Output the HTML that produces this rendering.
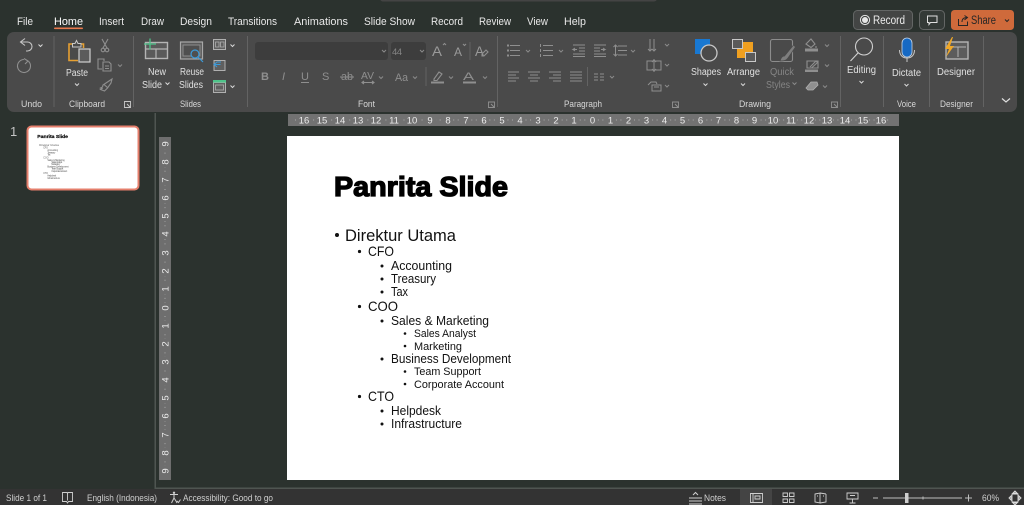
<!DOCTYPE html>
<html lang="en"><head><meta charset="utf-8"><title>Panrita Slide</title>
<style>
html,body{margin:0;padding:0;width:1024px;height:505px;overflow:hidden;background:#2b322e}
svg{display:block}
text{font-family:"Liberation Sans",sans-serif;white-space:pre}
.t{font-size:11px;fill:#e8e8e8}
.l{font-size:9.5px;fill:#d8d8d8}
.b{font-size:10px;fill:#e0e0e0}
.d{fill:#858585}
.i{fill:none;stroke:#c4c4c4;stroke-width:1.100}
.g{fill:none;stroke:#8f8f8f;stroke-width:1.100}
.c{fill:none;stroke:#d8d8d8;stroke-width:1}
.cg{fill:none;stroke:#8a8a8a;stroke-width:1}
.r{fill:#ececec;font-size:9.500px;text-anchor:middle}
.st{font-size:9.500px;fill:#cfcfcf}
</style></head><body>
<svg width="1024" height="505" viewBox="0 0 1024 505" xmlns="http://www.w3.org/2000/svg">
<rect width="1024" height="505" fill="#2b322e"/>
<rect x="380" y="-8" width="277" height="9.500" rx="3" fill="#444"/>

<!-- tabs -->
<g class="t">
<text x="17" y="25" textLength="16" lengthAdjust="spacingAndGlyphs">File</text>
<text x="54" y="25" textLength="29" lengthAdjust="spacingAndGlyphs" fill="#fff">Home</text>
<text x="99" y="25" textLength="25" lengthAdjust="spacingAndGlyphs">Insert</text>
<text x="141" y="25" textLength="23" lengthAdjust="spacingAndGlyphs">Draw</text>
<text x="180" y="25" textLength="32" lengthAdjust="spacingAndGlyphs">Design</text>
<text x="228" y="25" textLength="49" lengthAdjust="spacingAndGlyphs">Transitions</text>
<text x="294" y="25" textLength="54" lengthAdjust="spacingAndGlyphs">Animations</text>
<text x="364" y="25" textLength="51" lengthAdjust="spacingAndGlyphs">Slide Show</text>
<text x="431" y="25" textLength="32" lengthAdjust="spacingAndGlyphs">Record</text>
<text x="479" y="25" textLength="32" lengthAdjust="spacingAndGlyphs">Review</text>
<text x="527" y="25" textLength="21" lengthAdjust="spacingAndGlyphs">View</text>
<text x="564" y="25" textLength="22" lengthAdjust="spacingAndGlyphs">Help</text>
</g>
<rect x="54" y="27.500" width="29" height="1.600" rx=".8" fill="#e8794e"/>

<!-- top-right buttons -->
<rect x="853.500" y="10.500" width="59" height="19" rx="4" fill="#434544" stroke="#636665"/>
<circle cx="865" cy="20" r="4.600" fill="none" stroke="#e6e6e6"/><circle cx="865" cy="20" r="3" fill="#e6e6e6"/>
<text x="873" y="24" font-size="11.500" fill="#ececec" textLength="32" lengthAdjust="spacingAndGlyphs">Record</text>
<rect x="919.500" y="10.500" width="25" height="19" rx="4" fill="#343a37" stroke="#636665"/>
<path d="M927.500 16h9.500v6.500h-6.500l-1.500 2v-2h-1.500z" fill="none" stroke="#e0e0e0"/>
<rect x="951" y="10" width="63" height="20" rx="3.500" fill="#cf6a3b"/>
<path d="M958.500 19v6.500h9v-4M962 22c0-3 2-4.500 5-4.500M964.500 15.500l3 2-3 2.300" fill="none" stroke="#262626"/>
<text x="971" y="24" font-size="11.500" fill="#262626" textLength="25" lengthAdjust="spacingAndGlyphs">Share</text>
<path d="M1005 19.500l2 2 2-2" fill="none" stroke="#262626"/>

<!-- ribbon -->
<rect x="7" y="32" width="1010" height="80" rx="7" fill="#4a4a4a"/>
<g stroke="#636363" stroke-width="1">
<path d="M54 36v71M133.500 36v71M247.500 36v71M497.500 36v71M840.500 36v71M883.500 36v71M929.500 36v71M983.500 36v71"/>
<path d="M470 42v18M426 67v19M587.500 67v19"/>
</g>

<!-- undo group -->
<path class="i" d="M25 38.500l-4.500 3.500 4.500 3.500M20.500 42h7a4.500 4.500 0 0 1 0 9h-1.500"/>
<path class="c" d="M38.500 44.500l2 2 2-2"/>
<path class="g" d="M24 59.500a6.500 6.500 0 1 0 4.500 1.800M24 58.500l4 2.500-3 3"/>
<text class="l" x="21" y="107" textLength="21" lengthAdjust="spacingAndGlyphs">Undo</text>

<!-- clipboard group -->
<path d="M75 44h-6v16.500h9" fill="none" stroke="#e6a032" stroke-width="1.600"/>
<path d="M81 44h2.500v4" fill="none" stroke="#e6a032" stroke-width="1.600"/>
<path d="M72.500 47v-3.500h2.500l1.500-3 1.500 3h3V47z" fill="#4a4a4a" stroke="#c8c8c8"/>
<rect x="79" y="49" width="11" height="13" fill="#5b5b5b" stroke="#d0d0d0" stroke-width="1.200"/>
<text class="b" x="66" y="76" textLength="22" lengthAdjust="spacingAndGlyphs">Paste</text>
<path class="c" d="M75 83.500l2 2 2-2"/>
<path class="g" d="M102 39l5 9M108 39l-5 9"/><circle class="g" cx="103" cy="50" r="1.800"/><circle class="g" cx="107" cy="50" r="1.800"/>
<path class="g" d="M102 69h-4v-10h6v2M103 62h6l2 2v7h-8z"/>
<path class="g" d="M105 66h4M105 68.500h4"/>
<path class="cg" d="M118 64.500l2 2 2-2"/>
<path class="g" d="M103 85l6-4 3-2-1 4-3.500 5-3 3-4-1.500 1.500-1 -1.500-.5 2-1zM104 84.500l4 3.500"/>
<text class="l" x="69" y="107" textLength="36" lengthAdjust="spacingAndGlyphs">Clipboard</text>
<path d="M124.500 101.500h6v6h-6z" fill="none" stroke="#c8c8c8" stroke-width=".9"/><path d="M127 104l3 3" stroke="#c8c8c8"/>

<!-- slides group -->
<rect x="145.500" y="42.500" width="22" height="16" fill="#5a5a5a" stroke="#b4b4b4" stroke-width="1.400"/>
<path d="M156 49v9M146 49h21" stroke="#b4b4b4" stroke-width="1.200"/>
<path d="M150 38.500v11M144 44h12" stroke="#4fc38a" stroke-width="1.300"/>
<text class="b" x="148" y="75" textLength="18" lengthAdjust="spacingAndGlyphs">New</text>
<text class="b" x="142" y="88" textLength="20" lengthAdjust="spacingAndGlyphs">Slide</text>
<path class="c" d="M165.500 82.500l2 2 2-2"/>
<rect x="180.500" y="42" width="22" height="17" fill="#5a5a5a" stroke="#a8a8a8" stroke-width="1.200"/>
<rect x="183" y="45" width="17" height="11" fill="#4f4f4f" stroke="#8e8e8e"/>
<circle cx="195" cy="54" r="4" fill="#4f4f4f" stroke="#3d9ad8" stroke-width="1.200"/><path d="M198 57l5 5" stroke="#3d9ad8" stroke-width="1.200"/>
<text class="b" x="180" y="75" textLength="24" lengthAdjust="spacingAndGlyphs">Reuse</text>
<text class="b" x="179" y="88" textLength="24" lengthAdjust="spacingAndGlyphs">Slides</text>
<rect x="213.500" y="39.500" width="12" height="10" fill="#5f5f5f" stroke="#b0b0b0"/><path d="M215.500 42h3.500v5h-3.500zM220.500 42h3.500v5h-3.500z" fill="none" stroke="#b0b0b0" stroke-width=".8"/>
<path class="c" d="M230.500 44.500l2 2 2-2"/>
<rect x="214" y="60.500" width="11" height="10" fill="#5f5f5f" stroke="#b0b0b0"/><path d="M221 62h-4l-3 2.500 3 2.500M214.500 64.500h6" fill="none" stroke="#3d9ad8" stroke-width="1.100"/>
<rect x="213.500" y="82.500" width="12" height="10" fill="#5f5f5f" stroke="#b0b0b0"/><rect x="213" y="80" width="13" height="2.500" fill="#4fc38a"/><rect x="215.500" y="85" width="8" height="5" fill="none" stroke="#b0b0b0" stroke-width=".8"/>
<path class="c" d="M230.500 85.500l2 2 2-2"/>
<text class="l" x="180" y="107" textLength="21" lengthAdjust="spacingAndGlyphs">Slides</text>

<!-- font group -->
<rect x="255" y="42" width="133" height="18" rx="3" fill="#3d3d3d"/>
<rect x="391" y="42" width="35" height="18" rx="3" fill="#3d3d3d"/>
<path class="cg" d="M382 50l2 2 2-2M420 50l2 2 2-2"/>
<text class="d" x="392" y="55" font-size="9.500" textLength="10">44</text>
<g fill="#9a9a9a" font-size="14">
<text x="432" y="56" textLength="10" lengthAdjust="spacingAndGlyphs">A</text>
<text x="454" y="56" font-size="11.500" textLength="8" lengthAdjust="spacingAndGlyphs">A</text>
<text x="475" y="56" textLength="9" lengthAdjust="spacingAndGlyphs">A</text>
</g>
<path class="g" d="M443 45l1.500-1.500 1.500 1.500M463 44l1.500 1.500 1.500-1.500M482 54l4-4 2 2-4 4h-2z"/>
<g fill="#8f8f8f" font-size="11">
<text x="261" y="80" font-weight="bold">B</text>
<text x="282" y="80" font-style="italic" font-family="Liberation Serif">I</text>
<text x="301" y="80">U</text>
<text x="322" y="80">S</text>
<text x="341" y="80" textLength="12" lengthAdjust="spacingAndGlyphs">ab</text>
<text x="361" y="79" font-size="10.500" textLength="13" lengthAdjust="spacingAndGlyphs">AV</text>
<text x="395" y="81" textLength="13" lengthAdjust="spacingAndGlyphs">Aa</text>
<text x="463" y="80" textLength="11" lengthAdjust="spacingAndGlyphs">A</text>
</g>
<path class="g" d="M301 82.500h8M340 77h14M362 82.500h12M364 81l-2 1.500 2 1.500M372 81l2 1.500-2 1.500"/>
<path class="cg" d="M379 76.500l2 2 2-2M413 76.500l2 2 2-2M449 76.500l2 2 2-2M483 76.500l2 2 2-2"/>
<path class="g" d="M434 79l5-7 3 2-5 6.500h-3z"/><rect x="431" y="81.500" width="13" height="2" fill="#8f8f8f"/><rect x="463" y="81.500" width="13" height="2" fill="#8f8f8f"/>
<text class="l" x="358" y="107" textLength="17" lengthAdjust="spacingAndGlyphs">Font</text>
<path d="M488.500 102h6v5.500h-6z" fill="none" stroke="#8f8f8f" stroke-width=".9"/><path d="M491 104l3 3" stroke="#8f8f8f"/>

<!-- paragraph group -->
<g stroke="#8f8f8f" stroke-width="1" fill="none">
<path d="M510 45.500h10M510 50.500h10M510 55.500h10"/><path d="M507 45.500h2M507 50.500h2M507 55.500h2" stroke-width="2"/>
<path d="M543 45.500h10M543 50.500h10M543 55.500h10M540.500 44v3M540.500 49v3M540.500 54v3"/>
<path d="M573 45h12M579 48h6M579 51h6M573 54h12M573 56.500h12M577 49.500h-4l2-1.500M573 49.500l2 1.500"/>
<path d="M594 45h12M594 48h6M594 51h6M594 54h12M594 56.500h12M601 49.500h4l-2-1.500M605 49.500l-2 1.500"/>
<path d="M618 46h9M618 50.500h9M618 55h9M615.500 45v11M613.500 47l2-2 2 2M613.500 54l2 2 2-2"/>
<path d="M508 72h11M508 75h8M508 78h11M508 81h8"/>
<path d="M528 72h12M530 75h8M528 78h12M530 81h8"/>
<path d="M549 72h12M553 75h8M549 78h12M553 81h8"/>
<path d="M570 72h12M570 75h12M570 78h12M570 81h12"/>
<path d="M594 74h4M594 77h4M594 80h4M600 74h4M600 77h4M600 80h4"/>
<path d="M650 39v12M648 49l2 2 2-2M654 39v12M652 49l2 2 2-2"/>
<path d="M647 61h14v9h-14zM654 59v13M652 62l2-2 2 2M652 69l2 2 2-2"/>
<path d="M648 85l3-3h5l1 2M652 85h9v6h-9zM654 87h5"/>
</g>
<path class="cg" d="M526 50l2 2 2-2M559 50l2 2 2-2M631 50l2 2 2-2M610 76l2 2 2-2M665 44l2 2 2-2M665 64l2 2 2-2M665 85l2 2 2-2"/>
<text class="l" x="564" y="107" textLength="38" lengthAdjust="spacingAndGlyphs">Paragraph</text>
<path d="M672.500 102h6v5.500h-6z" fill="none" stroke="#8f8f8f" stroke-width=".9"/><path d="M675 104l3 3" stroke="#8f8f8f"/>

<!-- drawing group -->
<rect x="695" y="39" width="15" height="15" fill="#1878d2"/>
<circle cx="709" cy="53" r="8" fill="#4a4a4a" stroke="#c8c8c8" stroke-width="1.300"/>
<text class="b" x="691" y="75" textLength="30" lengthAdjust="spacingAndGlyphs">Shapes</text>
<path class="c" d="M703.500 83.500l2 2 2-2"/>
<rect x="737" y="42" width="16" height="16" fill="#f0a020"/>
<rect x="732.500" y="39.500" width="10" height="9" fill="#5a5a5a" stroke="#c8c8c8"/>
<rect x="745.500" y="52.500" width="10" height="9" fill="#5a5a5a" stroke="#c8c8c8"/>
<text class="b" x="727" y="75" textLength="33" lengthAdjust="spacingAndGlyphs">Arrange</text>
<path class="c" d="M741 83.500l2 2 2-2"/>
<rect x="770.500" y="39.500" width="22" height="22" rx="2" fill="none" stroke="#8c8c8c" stroke-width="1.100"/>
<path d="M780 61c1-3 2-5 4.500-5l9-11 2 2-7.500 11c-2 3-5 3-8 3z" fill="#7e7e7e" stroke="#4a4a4a" stroke-width=".7"/>
<text class="d" x="770" y="75" font-size="10" textLength="24" lengthAdjust="spacingAndGlyphs">Quick</text>
<text class="d" x="766" y="88" font-size="10" textLength="24" lengthAdjust="spacingAndGlyphs">Styles</text>
<path class="cg" d="M792.500 82.500l2 2 2-2"/>
<path class="g" d="M806 44l5-5 4 5-4 3.500zM816 46v2"/><rect x="805" y="48.500" width="13" height="3" fill="#8f8f8f"/>
<path class="g" d="M807 61h11v7h-11z"/><path class="g" d="M810 67l6-6 1.500 1.500-6 5.500"/><rect x="805" y="69.500" width="13" height="2.500" fill="#8f8f8f"/>
<path d="M806 88l5-6h6l1 3-5 5h-5z" fill="#909090" stroke="#b0b0b0" stroke-width=".8"/>
<path class="cg" d="M825 44.500l2 2 2-2M825 64.500l2 2 2-2M823 85.500l2 2 2-2"/>
<text class="l" x="739" y="107" textLength="32" lengthAdjust="spacingAndGlyphs">Drawing</text>
<path d="M831.500 102h6v5.500h-6z" fill="none" stroke="#8f8f8f" stroke-width=".9"/><path d="M834 104l3 3" stroke="#8f8f8f"/>

<!-- editing -->
<circle cx="864" cy="46.500" r="8.500" fill="none" stroke="#d0d0d0" stroke-width="1.100"/>
<path d="M858 53l-7.500 8" stroke="#d0d0d0" stroke-width="1.100"/>
<text class="b" x="847" y="73" textLength="29" lengthAdjust="spacingAndGlyphs">Editing</text>
<path class="c" d="M859.500 81l2 2 2-2"/>

<!-- voice -->
<rect x="902" y="38" width="10" height="19" rx="5" fill="#1669c4" stroke="#c6d6e8" stroke-width=".8"/>
<path d="M899.500 50c0 5 3 8 7.500 8s7.500-3 7.500-8M907 58v4" fill="none" stroke="#c8c8c8"/>
<text class="b" x="892" y="76" textLength="29" lengthAdjust="spacingAndGlyphs">Dictate</text>
<path class="c" d="M904.500 84l2 2 2-2"/>
<text class="l" x="897" y="107" textLength="19" lengthAdjust="spacingAndGlyphs">Voice</text>

<!-- designer -->
<rect x="946" y="42" width="22" height="17" fill="#5c5c5c" stroke="#b4b4b4" stroke-width="1.400"/>
<path d="M948 47h18M958 47v10" stroke="#b4b4b4"/>
<path d="M952 37l-7 12h4l-3 8 8-11h-4l3-9z" fill="#f0a828"/>
<text class="b" x="937" y="75" textLength="38" lengthAdjust="spacingAndGlyphs">Designer</text>
<text class="l" x="940" y="107" textLength="33" lengthAdjust="spacingAndGlyphs">Designer</text>
<path d="M1002 98.500l4 3.500 4-3.500" fill="none" stroke="#e0e0e0" stroke-width="1.200"/>

<!-- slide panel / splitter -->
<rect x="154.500" y="113" width="1.500" height="376" fill="#4f5551"/>
<text x="10" y="136" font-size="13" fill="#c4c4c4">1</text>
<rect x="27.500" y="126.500" width="111" height="63" rx="4" fill="#fff" stroke="#e57f6c" stroke-width="2"/>
<g transform="translate(29 127.500) scale(.1764)">
<g transform="translate(-287 -136)" fill="#555">
<text x="334" y="196" font-size="28" font-weight="bold" fill="#000" stroke="#000" stroke-width="1" textLength="174" lengthAdjust="spacingAndGlyphs">Panrita Slide</text>
<g font-size="13">
<text x="345" y="241" font-size="16" textLength="111">Direktur Utama</text>
<text x="368" y="256" textLength="26">CFO</text>
<text x="391" y="270" textLength="61">Accounting</text>
<text x="391" y="283" textLength="45">Treasury</text>
<text x="391" y="296" textLength="17">Tax</text>
<text x="368" y="311" textLength="30">COO</text>
<text x="391" y="325" textLength="98">Sales &amp; Marketing</text>
<text x="414" y="337" textLength="62">Sales Analyst</text>
<text x="414" y="350" textLength="48">Marketing</text>
<text x="391" y="363" textLength="120">Business Development</text>
<text x="414" y="375" textLength="67">Team Support</text>
<text x="414" y="388" textLength="90">Corporate Account</text>
<text x="368" y="401" textLength="26">CTO</text>
<text x="391" y="415" textLength="50">Helpdesk</text>
<text x="391" y="428" textLength="71">Infrastructure</text>
</g></g></g>

<!-- horizontal ruler -->
<rect x="288" y="114" width="611" height="12" fill="#727272"/>
<path d="M295 120H890" stroke="#aaa" stroke-width="1" stroke-dasharray="1 3.520"/>
<g fill="#727272">
<rect x="299" y="115" width="11" height="10"/><rect x="317" y="115" width="11" height="10"/><rect x="335" y="115" width="11" height="10"/><rect x="353" y="115" width="11" height="10"/><rect x="371" y="115" width="11" height="10"/><rect x="389" y="115" width="11" height="10"/><rect x="407" y="115" width="11" height="10"/><rect x="425" y="115" width="11" height="10"/><rect x="444" y="115" width="9" height="10"/><rect x="462" y="115" width="9" height="10"/><rect x="480" y="115" width="9" height="10"/><rect x="498" y="115" width="9" height="10"/><rect x="516" y="115" width="9" height="10"/><rect x="534" y="115" width="9" height="10"/><rect x="552" y="115" width="9" height="10"/><rect x="570" y="115" width="9" height="10"/><rect x="588" y="115" width="9" height="10"/><rect x="606" y="115" width="9" height="10"/><rect x="624" y="115" width="9" height="10"/><rect x="642" y="115" width="9" height="10"/><rect x="660" y="115" width="9" height="10"/><rect x="678" y="115" width="9" height="10"/><rect x="696" y="115" width="9" height="10"/><rect x="714" y="115" width="9" height="10"/><rect x="732" y="115" width="9" height="10"/><rect x="750" y="115" width="9" height="10"/><rect x="768" y="115" width="11" height="10"/><rect x="786" y="115" width="11" height="10"/><rect x="804" y="115" width="11" height="10"/><rect x="822" y="115" width="11" height="10"/><rect x="840" y="115" width="11" height="10"/><rect x="858" y="115" width="11" height="10"/><rect x="876" y="115" width="11" height="10"/>
</g>
<g class="r">
<text x="304" y="123.500">16</text><text x="322" y="123.500">15</text><text x="340" y="123.500">14</text><text x="358" y="123.500">13</text><text x="376" y="123.500">12</text><text x="394" y="123.500">11</text><text x="412" y="123.500">10</text><text x="430" y="123.500">9</text><text x="448" y="123.500">8</text><text x="466" y="123.500">7</text><text x="484" y="123.500">6</text><text x="502" y="123.500">5</text><text x="520" y="123.500">4</text><text x="538" y="123.500">3</text><text x="556" y="123.500">2</text><text x="574" y="123.500">1</text><text x="592.500" y="123.500">0</text><text x="610.500" y="123.500">1</text><text x="628.500" y="123.500">2</text><text x="646.500" y="123.500">3</text><text x="664.500" y="123.500">4</text><text x="682.500" y="123.500">5</text><text x="700.500" y="123.500">6</text><text x="718.500" y="123.500">7</text><text x="736.500" y="123.500">8</text><text x="754.500" y="123.500">9</text><text x="773" y="123.500">10</text><text x="791" y="123.500">11</text><text x="809" y="123.500">12</text><text x="827" y="123.500">13</text><text x="845" y="123.500">14</text><text x="863" y="123.500">15</text><text x="881" y="123.500">16</text>
</g>

<!-- vertical ruler -->
<rect x="159" y="137" width="12" height="343" fill="#6e6e6e"/>
<path d="M165 139V478" stroke="#aaa" stroke-width="1" stroke-dasharray="1 3.540"/>
<g fill="#6e6e6e">
<rect x="160" y="139" width="10" height="10"/><rect x="160" y="157" width="10" height="10"/><rect x="160" y="175" width="10" height="10"/><rect x="160" y="193" width="10" height="10"/><rect x="160" y="211" width="10" height="10"/><rect x="160" y="229" width="10" height="10"/><rect x="160" y="248" width="10" height="10"/><rect x="160" y="266" width="10" height="10"/><rect x="160" y="284" width="10" height="10"/><rect x="160" y="303" width="10" height="10"/><rect x="160" y="321" width="10" height="10"/><rect x="160" y="339" width="10" height="10"/><rect x="160" y="357" width="10" height="10"/><rect x="160" y="375" width="10" height="10"/><rect x="160" y="393" width="10" height="10"/><rect x="160" y="411" width="10" height="10"/><rect x="160" y="430" width="10" height="10"/><rect x="160" y="448" width="10" height="10"/><rect x="160" y="466" width="10" height="10"/>
</g>
<g class="r">
<text transform="translate(168.500 144) rotate(-90)">9</text><text transform="translate(168.500 162) rotate(-90)">8</text><text transform="translate(168.500 180) rotate(-90)">7</text><text transform="translate(168.500 198) rotate(-90)">6</text><text transform="translate(168.500 216) rotate(-90)">5</text><text transform="translate(168.500 234) rotate(-90)">4</text><text transform="translate(168.500 253) rotate(-90)">3</text><text transform="translate(168.500 271) rotate(-90)">2</text><text transform="translate(168.500 289) rotate(-90)">1</text><text transform="translate(168.500 308) rotate(-90)">0</text><text transform="translate(168.500 326) rotate(-90)">1</text><text transform="translate(168.500 344) rotate(-90)">2</text><text transform="translate(168.500 362) rotate(-90)">3</text><text transform="translate(168.500 380) rotate(-90)">4</text><text transform="translate(168.500 398) rotate(-90)">5</text><text transform="translate(168.500 416) rotate(-90)">6</text><text transform="translate(168.500 435) rotate(-90)">7</text><text transform="translate(168.500 453) rotate(-90)">8</text><text transform="translate(168.500 471) rotate(-90)">9</text>
</g>

<!-- slide -->
<rect x="287" y="136" width="612" height="344" fill="#fff"/>
<g fill="#111">
<text x="334" y="196" font-size="28" font-weight="bold" fill="#000" stroke="#000" stroke-width="1.300" textLength="174" lengthAdjust="spacingAndGlyphs">Panrita Slide</text>
<text x="345" y="241" font-size="17" textLength="111" lengthAdjust="spacingAndGlyphs">Direktur Utama</text>
<g font-size="14">
<text x="368" y="256" textLength="26" lengthAdjust="spacingAndGlyphs">CFO</text>
<text x="368" y="311" textLength="30" lengthAdjust="spacingAndGlyphs">COO</text>
<text x="368" y="401" textLength="26" lengthAdjust="spacingAndGlyphs">CTO</text>
</g>
<g font-size="12.500">
<text x="391" y="270" textLength="61" lengthAdjust="spacingAndGlyphs">Accounting</text>
<text x="391" y="283" textLength="45" lengthAdjust="spacingAndGlyphs">Treasury</text>
<text x="391" y="296" textLength="17" lengthAdjust="spacingAndGlyphs">Tax</text>
<text x="391" y="325" textLength="98" lengthAdjust="spacingAndGlyphs">Sales &amp; Marketing</text>
<text x="391" y="363" textLength="120" lengthAdjust="spacingAndGlyphs">Business Development</text>
<text x="391" y="415" textLength="50" lengthAdjust="spacingAndGlyphs">Helpdesk</text>
<text x="391" y="428" textLength="71" lengthAdjust="spacingAndGlyphs">Infrastructure</text>
</g>
<g font-size="11">
<text x="414" y="337" textLength="62" lengthAdjust="spacingAndGlyphs">Sales Analyst</text>
<text x="414" y="350" textLength="48" lengthAdjust="spacingAndGlyphs">Marketing</text>
<text x="414" y="375" textLength="67" lengthAdjust="spacingAndGlyphs">Team Support</text>
<text x="414" y="388" textLength="90" lengthAdjust="spacingAndGlyphs">Corporate Account</text>
</g>
<circle cx="337" cy="235" r="2"/>
<circle cx="359.500" cy="251.500" r="1.600"/><circle cx="359.500" cy="306.500" r="1.600"/><circle cx="359.500" cy="396.500" r="1.600"/>
<circle cx="382" cy="266" r="1.500"/><circle cx="382" cy="279" r="1.500"/><circle cx="382" cy="292" r="1.500"/><circle cx="382" cy="321" r="1.500"/><circle cx="382" cy="359" r="1.500"/><circle cx="382" cy="411" r="1.500"/><circle cx="382" cy="424" r="1.500"/>
<circle cx="405" cy="333.500" r="1.300"/><circle cx="405" cy="346" r="1.300"/><circle cx="405" cy="371.500" r="1.300"/><circle cx="405" cy="384" r="1.300"/>
</g>

<!-- status bar -->
<rect x="155" y="487.500" width="869" height="1.500" fill="#4f5551"/>
<rect x="0" y="489" width="1024" height="16" fill="#333"/>
<text class="st" x="6" y="501" textLength="41" lengthAdjust="spacingAndGlyphs">Slide 1 of 1</text>
<path d="M62.500 492.500h4.500l.5 1 .5-1h4.500v9h-4l-1 1.500-1-1.500h-4zM67.500 493.500v7" fill="none" stroke="#cfcfcf" stroke-width=".9"/>
<text class="st" x="87" y="501" textLength="70" lengthAdjust="spacingAndGlyphs">English (Indonesia)</text>
<path d="M170 494.500h8M174 494v4l-2.500 5M174 498l2 3 1 2M177 501l1.500 1.500 2-3" fill="none" stroke="#cfcfcf" stroke-width="1"/><circle cx="174" cy="492.800" r="1.200" fill="#cfcfcf"/>
<text class="st" x="183" y="501" textLength="90" lengthAdjust="spacingAndGlyphs">Accessibility: Good to go</text>
<path d="M689 498h13M689 501h13M689 504h13" stroke="#cfcfcf"/><path d="M693 495l2.500-2.500L698 495" fill="none" stroke="#cfcfcf"/>
<text class="st" x="704" y="501" textLength="22" lengthAdjust="spacingAndGlyphs">Notes</text>
<rect x="740" y="489" width="32" height="16" fill="#444"/>
<g fill="none" stroke="#cfcfcf" stroke-width=".9">
<path d="M750.500 493.500h12v9h-12zM753 493.500v9M755 496h5v3h-5z"/>
<path d="M783 493h4.500v3.500H783zM789.500 493h4.500v3.500h-4.500zM783 499h4.500v3.500H783zM789.500 499h4.500v3.500h-4.500z"/>
<path d="M815 494l5-1v10l-5-1zM826 494l-6-1M826 494v8l-6 1M817 496h1M823 496h1"/>
<path d="M847 493h11v6h-11zM852.500 499v4M849.500 503h6M850 495.500h5"/>
</g>
<path d="M873 498h5M965 498h7M968.500 494.500v7M883 498h79" stroke="#bdbdbd" stroke-width="1"/>
<path d="M923 496.500v3" stroke="#bdbdbd"/>
<rect x="905" y="493" width="3.500" height="10" fill="#cfcfcf"/>
<text class="st" x="982" y="501" textLength="17" lengthAdjust="spacingAndGlyphs">60%</text>
<path d="M1012 494h6v8h-6zM1015 491l-2 2h4zM1015 505l-2-2h4zM1009 498l2-2v4zM1021 498l-2-2v4z" fill="none" stroke="#dcdcdc" stroke-width=".9"/>
</svg>
</body></html>
